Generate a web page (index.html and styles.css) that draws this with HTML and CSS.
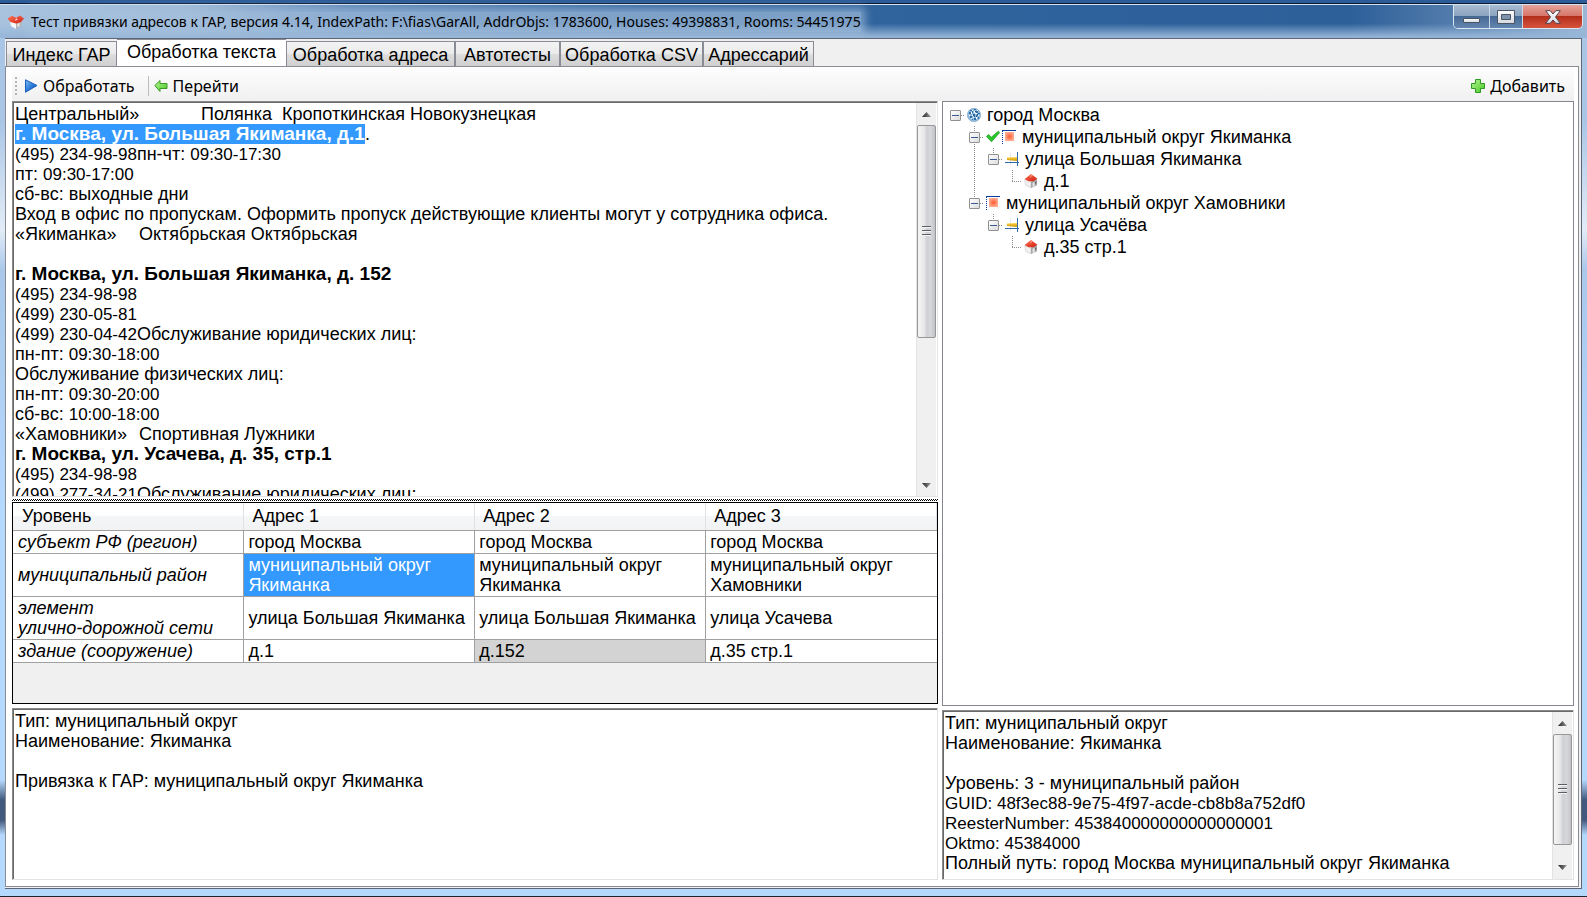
FILE: index.html
```html
<!DOCTYPE html>
<html lang="ru">
<head>
<meta charset="utf-8">
<title>Тест привязки адресов к ГАР</title>
<link rel="stylesheet" href="styles.css">
</head>
<body>
<svg class="defs" aria-hidden="true">
  <defs>
    <linearGradient id="gBlue" x1="0" y1="0" x2="1" y2="1"><stop offset="0" stop-color="#7fbdf5"/><stop offset=".5" stop-color="#2e7ddb"/><stop offset="1" stop-color="#0c4fae"/></linearGradient>
    <linearGradient id="gGreen" x1="0" y1="0" x2="1" y2="1"><stop offset="0" stop-color="#b8f59a"/><stop offset="1" stop-color="#44c81e"/></linearGradient>
    <linearGradient id="gRed" x1="0" y1="0" x2="1" y2="1"><stop offset="0" stop-color="#ff7a5c"/><stop offset="1" stop-color="#d01808"/></linearGradient>
    <radialGradient id="gArea"><stop offset="0" stop-color="#ff5a30"/><stop offset="1" stop-color="#ffab90"/></radialGradient>
    <linearGradient id="gRoad" x1="0" y1="0" x2="0" y2="1"><stop offset="0" stop-color="#ffd94a"/><stop offset="1" stop-color="#d09000"/></linearGradient>
    <linearGradient id="gArrow" x1="0" y1="0" x2="1" y2="0"><stop offset="0" stop-color="#222"/><stop offset="1" stop-color="#999"/></linearGradient>
    <linearGradient id="gWhite" x1="0" y1="0" x2="0" y2="1"><stop offset="0" stop-color="#fff"/><stop offset="1" stop-color="#d4d8de"/></linearGradient>
    <symbol id="house" viewBox="0 0 14 14">
      <path d="M.8 5.500 7 7.500V14L1.500 11.200z" fill="#f0f0f0" stroke="#c4c4c4" stroke-width=".5"/><path d="M7 7.500l6-2.200v6L7 14z" fill="#a4a4a4"/>
      <path d="M8.600 8.800l2-.8v4l-2 1z" fill="#e8e8e8"/><path d="M11.200 8l1-.4v2l-1 .5z" fill="#555"/>
      <path d="M7 0 13.400 4.800 9.500 7.200 4.500 7.200.6 5z" fill="url(#gRed)"/><path d="M7 .4 8.500 1.600 5.800 4z" fill="#ff9a80"/>
    </symbol>
    <symbol id="globe" viewBox="0 0 14 14">
      <circle cx="7" cy="7" r="6.700" fill="#8fbbe0" stroke="#7d9fbe" stroke-width=".6"/>
      <path d="M3 2h2v1H3zM2 4h2v2H2zM5 3h1v2H5zM7 1h2v1H7zM9 3h2v2H9zM6 6h2v2H6zM3 8h2v2H3zM9 7h2v1H9zM11 9h1v2h-1zM7 10h2v2H7zM5 11h1v1H5zM11 5h2v1h-2z" fill="#2f6ea8"/>
      <path d="M5 2h1v1H5zM4 4h1v2H4zM7 3h1v2H7zM8 5h2v1H8zM5 7h1v1H5zM2 7h1v1H2zM10 2h1v1h-1zM9 9h1v2H9zM6 9h1v1H6zM4 10h1v1H4zM11 7h1v1h-1z" fill="#fff"/>
      <path d="M8 3h1v1H8zM9 8h1v1H9zM10 6h1v1h-1zM7 8h1v1H7z" fill="#234e80"/>
    </symbol>
    <symbol id="area" viewBox="0 0 14 14">
      <path d="M0 .5h14" stroke="#0b3c9c"/><path d="M.5 1v13" stroke="#0b3c9c" stroke-dasharray="1 1"/>
      <path d="M3 2h9v9H3z" fill="url(#gArea)"/><path d="M4 12h9V5" fill="none" stroke="#f3f3f3"/>
    </symbol>
    <symbol id="road" viewBox="0 0 14 14">
      <path d="M5.500 1v12" stroke="#e4e4ee"/><path d="M2 5.500 12 5v4L2 8z" fill="url(#gRoad)"/>
      <path d="M0 10.500h14M12.500 0v14" stroke="#2d6aa6"/>
    </symbol>
    <symbol id="check" viewBox="0 0 14 14"><path d="M.5 6.500 2.500 4.500 5.300 7.200 12.300 1.200l1.400 1.400-8.200 9.200z" fill="#2cc52a" stroke="#0f9a12" stroke-width=".7"/></symbol>
    <symbol id="up" viewBox="0 0 9 5"><path d="M0 5 4.500 0 9 5z" fill="url(#gArrow)"/></symbol>
    <symbol id="down" viewBox="0 0 9 5"><path d="M0 0h9L4.500 5z" fill="url(#gArrow)"/></symbol>
  </defs>
</svg>

<div class="window">
  <header class="titlebar">
    <svg class="app-icon" viewBox="0 0 18 14" aria-hidden="true">
      <path d="M3 6l6 2v6l-5-3z" fill="#f7f7f7"/><path d="M9 8l6-2-1 5-5 3z" fill="#b9b0b0"/><path d="M10.500 9l2-1v3l-2 1z" fill="#eee"/>
      <path d="M.5 3.500 5 .8 9 2.800 13 .5 17 3.500 14 7 9 8.500 3.500 7z" fill="url(#gRed)"/><path d="M9 3l2 1.500-3 1.500z" fill="#fff" opacity=".7"/>
    </svg>
    <h1 class="title"><span>Тест привязки адресов к ГАР, версия 4.14, IndexPath: F:\fias\GarAll, AddrObjs: 1783600, Houses: 49398831, Rooms: 54451975</span></h1>
    <div class="caption-buttons">
      <button class="cap cap-min" aria-label="Свернуть"><svg width="17" height="6" viewBox="0 0 17 6"><path d="M.5.5h16v4H.5z" fill="url(#gWhite)" stroke="#4b5563"/></svg></button>
      <button class="cap cap-max" aria-label="Развернуть"><svg width="18" height="14" viewBox="0 0 18 14"><path d="M.5.5h17v13H.5z" fill="url(#gWhite)" stroke="#4b5563"/><path d="M4.500 4.500h9v5h-9z" fill="#7e95ad" stroke="#4b5563"/></svg></button>
      <button class="cap cap-close" aria-label="Закрыть"><svg width="16" height="14" viewBox="0 0 16 14"><path d="M.7.7h4.500L8 4 10.800.7h4.500L10.500 7l4.800 6.300h-4.500L8 10l-2.800 3.300H.7L5.500 7z" fill="url(#gWhite)" stroke="#54424e"/></svg></button>
    </div>
  </header>

  <main class="client">
    <nav class="tabs" role="tablist">
      <button class="tab tab-1" role="tab">Индекс ГАР</button>
      <button class="tab tab-2 active" role="tab" aria-selected="true">Обработка текста</button>
      <button class="tab tab-3" role="tab">Обработка адреса</button>
      <button class="tab tab-4" role="tab">Автотесты</button>
      <button class="tab tab-5" role="tab">Обработка CSV</button>
      <button class="tab tab-6" role="tab">Адрессарий</button>
    </nav>

    <section class="page">
      <div class="toolbar">
        <span class="grip"></span>
        <button class="tool"><svg width="14" height="14" viewBox="0 0 14 14"><path d="M1.500.8 13 6.500 1.500 13.200z" fill="url(#gBlue)" stroke="#1a5cb8"/></svg>Обработать</button>
        <span class="separator"></span>
        <button class="tool"><svg width="14" height="14" viewBox="0 0 14 14"><path d="M.8 6.500 6 1.500v3h7v5H6v3z" fill="url(#gGreen)" stroke="#3c9a28"/></svg>Перейти</button>
        <button class="tool tool-add"><svg width="14" height="14" viewBox="0 0 14 14"><path d="M4.500.5h5v4h4v5h-4v4h-5v-4h-4v-5h4z" fill="url(#gGreen)" stroke="#2e9a22"/></svg>Добавить</button>
      </div>

      <div class="columns">
        <div class="left">
          <div class="sunken editor">
            <div class="lines" role="textbox" aria-multiline="true" aria-label="Текст" contenteditable="true" spellcheck="false"><p>Центральный»	Полянка  Кропоткинская Новокузнецкая</p><p><b class="marked">г. Москва, ул. Большая Якиманка, д.1</b>.</p><p><i>(495) 234-98-98</i>пн-чт: <i>09:30-17:30</i></p><p>пт: <i>09:30-17:00</i></p><p>сб-вс: выходные дни</p><p>Вход в офис по пропускам. Оформить пропуск действующие клиенты могут у сотрудника офиса.</p><p>«Якиманка»	Октябрьская Октябрьская</p><p></p><p><b>г. Москва, ул. Большая Якиманка, д. 152</b></p><p><i>(495) 234-98-98</i></p><p><i>(499) 230-05-81</i></p><p><i>(499) 230-04-42</i>Обслуживание юридических лиц:</p><p>пн-пт: <i>09:30-18:00</i></p><p>Обслуживание физических лиц:</p><p>пн-пт: <i>09:30-20:00</i></p><p>сб-вс: <i>10:00-18:00</i></p><p>«Хамовники»	Спортивная Лужники</p><p><b>г. Москва, ул. Усачева, д. 35, стр.1</b></p><p><i>(495) 234-98-98</i></p><p><i>(499) 277-34-21</i>Обслуживание юридических лиц:</p></div>
            <div class="scrollbar">
              <button class="sb-btn" aria-label="Вверх"><svg width="9" height="5"><use href="#up"/></svg></button>
              <div class="sb-track sb-track-editor"><div class="sb-thumb"><span></span></div></div>
              <button class="sb-btn" aria-label="Вниз"><svg width="9" height="5"><use href="#down"/></svg></button>
            </div>
          </div>
          <div class="splitter"></div>
          <div class="grid">
            <table>
              <thead><tr><th>Уровень</th><th>Адрес 1</th><th>Адрес 2</th><th>Адрес 3</th></tr></thead>
              <tbody>
                <tr class="one"><td>субъект РФ (регион)</td><td>город Москва</td><td>город Москва</td><td>город Москва</td></tr>
                <tr class="two"><td>муниципальный район</td><td class="selected">муниципальный округ Якиманка</td><td>муниципальный округ Якиманка</td><td>муниципальный округ Хамовники</td></tr>
                <tr class="two"><td>элемент<br>улично-дорожной сети</td><td>улица Большая Якиманка</td><td>улица Большая Якиманка</td><td>улица Усачева</td></tr>
                <tr class="one"><td>здание (сооружение)</td><td>д.1</td><td class="missing">д.152</td><td>д.35 стр.1</td></tr>
              </tbody>
            </table>
          </div>
          <textarea class="sunken note" aria-label="Сведения об элементе" readonly spellcheck="false">Тип: муниципальный округ
Наименование: Якиманка

Привязка к ГАР: муниципальный округ Якиманка</textarea>
        </div>

        <div class="right">
          <div class="tree" role="tree">
            <div class="node" role="treeitem" aria-level="1"><span class="cell first"><button class="toggle" aria-label="Свернуть узел"></button></span><svg class="ico"><use href="#globe"/></svg><span class="label">город Москва</span></div>
            <div class="node" role="treeitem" aria-level="2"><span class="cell"></span><span class="cell line"><button class="toggle" aria-label="Свернуть узел"></button></span><svg class="ico"><use href="#check"/></svg><svg class="ico"><use href="#area"/></svg><span class="label">муниципальный округ Якиманка</span></div>
            <div class="node" role="treeitem" aria-level="3"><span class="cell"></span><span class="cell line"></span><span class="cell end"><button class="toggle" aria-label="Свернуть узел"></button></span><svg class="ico"><use href="#road"/></svg><span class="label">улица Большая Якиманка</span></div>
            <div class="node" role="treeitem" aria-level="4"><span class="cell"></span><span class="cell line"></span><span class="cell"></span><span class="cell end"></span><svg class="ico"><use href="#house"/></svg><span class="label">д.1</span></div>
            <div class="node" role="treeitem" aria-level="2"><span class="cell"></span><span class="cell end"><button class="toggle" aria-label="Свернуть узел"></button></span><svg class="ico"><use href="#area"/></svg><span class="label">муниципальный округ Хамовники</span></div>
            <div class="node" role="treeitem" aria-level="3"><span class="cell"></span><span class="cell"></span><span class="cell end"><button class="toggle" aria-label="Свернуть узел"></button></span><svg class="ico"><use href="#road"/></svg><span class="label">улица Усачёва</span></div>
            <div class="node" role="treeitem" aria-level="4"><span class="cell"></span><span class="cell"></span><span class="cell"></span><span class="cell end"></span><svg class="ico"><use href="#house"/></svg><span class="label">д.35 стр.1</span></div>
          </div>
          <div class="sunken info">
            <div class="lines"><p>Тип: муниципальный округ</p><p>Наименование: Якиманка</p><p></p><p>Уровень: <i>3</i> - муниципальный район</p><p><i>GUID: 48f3ec88-9e75-4f97-acde-cb8b8a752df0</i></p><p><i>ReesterNumber: 453840000000000000001</i></p><p><i>Oktmo: 45384000</i></p><p>Полный путь: город Москва муниципальный округ Якиманка</p></div>
            <div class="scrollbar">
              <button class="sb-btn" aria-label="Вверх"><svg width="9" height="5"><use href="#up"/></svg></button>
              <div class="sb-track sb-track-info"><div class="sb-thumb"><span></span></div></div>
              <button class="sb-btn" aria-label="Вниз"><svg width="9" height="5"><use href="#down"/></svg></button>
            </div>
          </div>
        </div>
      </div>
    </section>
  </main>
</div>
</body>
</html>
```
FILE: styles.css
```css
* { box-sizing: border-box; }
html, body { margin: 0; height: 100%; overflow: hidden; }
body {
  font-family: "Liberation Sans", Arial, sans-serif;
  font-size: 18px;
  line-height: 20px;
  color: #000;
}
button { font: inherit; color: inherit; margin: 0; padding: 0; border: 0; background: none; }
svg { display: block; flex: none; }
p { margin: 0; }
.defs { position: absolute; width: 0; height: 0; }

.window {
  display: flex;
  flex-direction: column;
  height: 100vh;
  padding: 0 5px 7px;
  border-bottom: 1px solid #20242c;
  background: linear-gradient(180deg, #a9c6e6 120px, #e3ecf7 230px, #a9c8ea 270px, #b5d8fd 500px, #b5d8fd 780px, #40597c 800px, #40597c 820px, #b5d8fd 835px);
}
.titlebar {
  display: flex;
  align-items: center;
  flex: 0 0 38px;
  margin: 0 -5px;
  padding: 5px 4px 0 7px;
  background:
    linear-gradient(#d5e4f3, #d5e4f3) 0 4px / 100% 1px no-repeat,
    linear-gradient(#0b1830, #0b1830) 0 3px / 100% 1px no-repeat,
    linear-gradient(#2c5c97, #2c5c97) 0 0 / 100% 3px no-repeat,
    linear-gradient(180deg, transparent 62%, rgba(150, 182, 216, .95) 96%),
    linear-gradient(90deg, #a9c3df 0, #9fb9d6 12%, #5d87b8 22%, #37689f 40%, #2f639c 60%, #2d5f99 85%, #5a82b0 93%, #9db8d5 100%);
}
.app-icon { width: 18px; height: 14px; }
.title {
  flex: 1;
  margin: 0 0 0 6px;
  font: 14px/20px "Noto Sans", sans-serif;
  white-space: nowrap;
}
.title span {
  display: inline-block;
  background: rgba(165, 192, 221, .65);
  box-shadow: 0 0 8px 4px rgba(165, 192, 221, .65);
}
.caption-buttons {
  display: flex;
  align-self: flex-start;
  height: 24px;
  border: 1px solid #dbe7f3;
  border-top: 0;
  border-radius: 0 0 5px 5px;
  overflow: hidden;
}
.cap { display: flex; align-items: center; justify-content: center; border-right: 1px solid #c9d7e6; background: linear-gradient(#a9bcd1, #8aa3bf 48%, #456a95 50%, #6386ae); }
.cap-min { width: 36px; padding-top: 8px; }
.cap-max { width: 33px; }
.cap-close { width: 59px; border-right: 0; background: linear-gradient(#e5a399, #d67467 48%, #b42f1b 50%, #d7543c); }

.client {
  display: flex;
  flex-direction: column;
  flex: 1;
  min-height: 0;
  background: #f0f0f0;
  border: 1px solid #5f6678;
  border-left-width: 0;
}
.tabs { display: flex; align-items: flex-end; flex: 0 0 27px; padding-left: 1px; }
.tab {
  height: 25px;
  padding-top: 1px;
  border: 1px solid #898c95;
  border-bottom: 0;
  background: linear-gradient(#f3f3f3, #ebebeb 48%, #dddddd 52%, #cfcfcf);
  white-space: nowrap;
  text-align: center;
}
.tab.active { height: 27px; padding: 0 0 2px; background: #fff; border-width: 1px 0 0; }
.tab-1, .tab-6 { flex: 0 0 111px; }
.tab-2, .tab-3 { flex: 0 0 169px; }
.tab-4 { flex: 0 0 105px; }
.tab-5 { flex: 0 0 143px; }

.page {
  display: flex;
  flex-direction: column;
  flex: 1;
  min-height: 0;
  margin: 0 2px 1px 0;
  padding: 1px 4px 6px 6px;
  border: 1px solid #898c95;
  background: #fff;
}

.toolbar {
  display: flex;
  align-items: center;
  flex: 0 0 33px;
  padding: 2px 9px 0 3px;
  background: linear-gradient(#fdfdfd, #f0f0f0);
  font-family: "Noto Sans", sans-serif;
  font-size: 16px;
}
.grip { width: 2px; height: 18px; background: repeating-linear-gradient(#b4b4b4 0 2px, transparent 2px 4px); }
.tool { display: flex; align-items: center; gap: 5px; height: 24px; margin-left: 7px; white-space: nowrap; }
.separator { width: 1px; height: 20px; margin-left: 13px; background: #bdbdbd; }
.separator + .tool { margin-left: 5px; }
.tool-add { margin-left: auto; }

.columns { display: grid; grid-template-columns: minmax(0, 926fr) minmax(0, 632fr); gap: 4px; flex: 1; min-height: 0; }
.left { display: grid; grid-template-rows: minmax(0, 396fr) 5px minmax(0, 202fr) minmax(0, 176fr); min-height: 0; }
.right { display: grid; grid-template-rows: minmax(0, 606fr) minmax(0, 170fr); row-gap: 4px; min-height: 0; }

.sunken {
  display: flex;
  background: #fff;
  border: 1px solid;
  border-color: #8a8a8a #e3e3e3 #e3e3e3 #8a8a8a;
  box-shadow: inset 1px 1px 0 #696969;
  overflow: hidden;
  min-height: 0;
}
.lines { flex: 1; min-width: 0; padding: 2px 0 0 2px; overflow: hidden; outline: 0; }
.lines p { height: 20px; white-space: pre; tab-size: 62px; }
.lines i { font-style: normal; font-size: 17px; }
.lines b { font-size: 19px; }
.marked { display: inline-block; background: #3399ff; color: #fff; }

.scrollbar { display: flex; flex-direction: column; flex: 0 0 20px; margin: 1px 1px 0 0; background: #f0f0f0; border-left: 1px solid #e3e3e3; }
.sb-btn { display: flex; align-items: center; justify-content: center; flex: 0 0 22px; }
.sb-track { display: flex; flex-direction: column; flex: 1; min-height: 0; }
.sb-thumb {
  display: flex;
  align-items: center;
  justify-content: center;
  border: 1px solid #979797;
  border-radius: 2px;
  background: linear-gradient(90deg, #f5f5f5, #e6e6e8 38%, #cfd0d4 52%, #d6d7da 75%, #c2c3c7);
}
.sb-track-editor .sb-thumb { height: 61%; }
.sb-track-info .sb-thumb { height: 90%; }
.sb-thumb span { width: 9px; height: 10px; background: repeating-linear-gradient(#5a5f66 0 1px, #f4f4f4 1px 2px, transparent 2px 4px); }

.splitter {
  margin: 2px 0 1px;
  background: repeating-conic-gradient(#000 0 25%, #fff 0 50%) 0 0 / 2px 2px;
}
.grid { border: 1px solid #000; background: #f0f0f0; overflow: hidden; }
table { width: 100%; border-collapse: collapse; table-layout: fixed; }
th {
  height: 27px;
  padding: 0 0 0 8px;
  text-align: left;
  font-weight: normal;
  background: linear-gradient(#fff, #fff 45%, #f5f6f8 50%, #f1f2f4);
  border-right: 1px solid #e0e1e4;
  border-bottom: 1px solid #a0a0a0;
}
th:first-child { padding-left: 9px; }
td { padding: 0 0 0 4px; background: #fff; border: 1px solid #a0a0a0; vertical-align: middle; }
td:first-child { padding-left: 5px; font-style: italic; white-space: nowrap; border-left: 0; }
td:last-child { border-right: 0; }
.one td { height: 23px; }
.two td { height: 43px; }
td.selected { background: #3399ff; color: #fff; }
td.missing { background: #d3d3d3; }

.note {
  display: block;
  width: 100%;
  height: calc(100% - 4px);
  margin: 4px 0 0;
  padding: 2px 0 0 2px;
  font: inherit;
  color: inherit;
  resize: none;
  outline: 0;
}

.tree { padding: 2px 0 0 3px; border: 1px solid #828790; background: #fff; overflow: hidden; }
.node { display: flex; align-items: center; height: 22px; white-space: nowrap; }
.cell { display: flex; align-items: center; flex: 0 0 19px; height: 22px; padding-left: 4px; }
.line, .end, .first { background-repeat: no-repeat; }
.first { background-image: repeating-linear-gradient(90deg, #8c8c8c 0 1px, transparent 1px 2px); background-size: 10px 1px; background-position: 9px 11px; }
.line { background-image: repeating-linear-gradient(#8c8c8c 0 1px, transparent 1px 2px), repeating-linear-gradient(90deg, #8c8c8c 0 1px, transparent 1px 2px); background-size: 1px 100%, 10px 1px; background-position: 9px 0, 9px 11px; }
.line:empty { background-size: 1px 100%, 0 0; }
.end { background-image: repeating-linear-gradient(#8c8c8c 0 1px, transparent 1px 2px), repeating-linear-gradient(90deg, #8c8c8c 0 1px, transparent 1px 2px); background-size: 1px 12px, 10px 1px; background-position: 9px 0, 9px 11px; }
.toggle {
  width: 11px;
  height: 11px;
  border: 1px solid #919191;
  border-radius: 1px;
  background: linear-gradient(#3b5a96, #3b5a96) center / 7px 1px no-repeat, linear-gradient(135deg, #fff, #dcdcdc);
}
.ico { width: 14px; height: 14px; margin-left: 2px; }
.label { margin-left: 6px; }
```
